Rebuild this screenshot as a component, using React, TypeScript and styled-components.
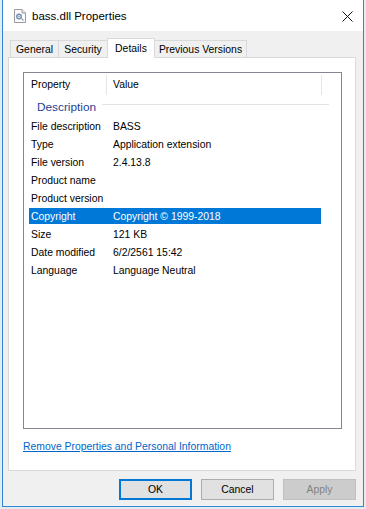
import React from 'react';
import styled, { createGlobalStyle } from 'styled-components';

const GlobalStyle = createGlobalStyle`
  html, body {
    margin: 0;
    padding: 0;
    background: #e6ebf0;
  }
  body {
    font-family: "Segoe UI", "Liberation Sans", Arial, sans-serif;
    font-size: 10.4px;
    color: #000;
  }
`;

const tabs = [
  { label: 'General', width: 49 },
  { label: 'Security', width: 50 },
  { label: 'Details', width: 48, selected: true },
  { label: 'Previous Versions', width: 93 }
];

const rows = [
  { name: 'File description', value: 'BASS' },
  { name: 'Type', value: 'Application extension' },
  { name: 'File version', value: '2.4.13.8' },
  { name: 'Product name', value: '' },
  { name: 'Product version', value: '' },
  { name: 'Copyright', value: 'Copyright \u00a9 1999-2018', selected: true },
  { name: 'Size', value: '121 KB' },
  { name: 'Date modified', value: '6/2/2561 15:42' },
  { name: 'Language', value: 'Language Neutral' }
];

const DllIcon = () => (
  <svg width="12" height="14" viewBox="0 0 12 14">
    <path d="M0.5 0.5 H8 L11.5 4 V13.5 H0.5 Z" fill="#fdfdfd" stroke="#9a9a9a" />
    <path d="M8 0.5 V4 H11.5" fill="#e8e8e8" stroke="#9a9a9a" />
    <circle cx="5" cy="7.5" r="2.3" fill="none" stroke="#6f8fb0" strokeWidth="1.4" />
    <circle cx="5" cy="7.5" r="0.8" fill="#6f8fb0" />
    <path d="M7.5 9.5 L9.5 11.5" stroke="#8aa6c2" strokeWidth="1.2" />
  </svg>
);

const CloseIcon = () => (
  <svg width="11" height="11" viewBox="0 0 11 11">
    <path d="M0.5 0.5 L10.5 10.5 M10.5 0.5 L0.5 10.5" stroke="#111" strokeWidth="1" />
  </svg>
);

const App = () => {
  return (
    <>
      <GlobalStyle />
      <Window>
        <TitleBar>
          <TitleIcon>
            <DllIcon />
          </TitleIcon>
          <TitleText>bass.dll Properties</TitleText>
          <CloseButton>
            <CloseIcon />
          </CloseButton>
        </TitleBar>
        <Body>
          <TabStrip>
            {tabs.map((t) => (
              <Tab key={t.label} width={t.width} selected={t.selected}>
                {t.label}
              </Tab>
            ))}
          </TabStrip>
          <Panel>
            <ListBox>
              <HeaderRow>
                <HeaderCell width={83}>Property</HeaderCell>
                <HeaderCell width={215}>Value</HeaderCell>
              </HeaderRow>
              <GroupHeader>
                <GroupTitle>Description</GroupTitle>
                <GroupLine />
              </GroupHeader>
              {rows.map((r) => (
                <Row key={r.name} selected={r.selected}>
                  <NameCell>{r.name}</NameCell>
                  <ValueCell>{r.value}</ValueCell>
                </Row>
              ))}
            </ListBox>
            <RemoveLink>Remove Properties and Personal Information</RemoveLink>
          </Panel>
          <ButtonBar>
            <DialogButton variant="default">OK</DialogButton>
            <DialogButton>Cancel</DialogButton>
            <DialogButton variant="disabled">Apply</DialogButton>
          </ButtonBar>
        </Body>
      </Window>
    </>
  );
};

export default App;

interface tabProps {
  width: number;
  selected?: boolean;
}

interface rowProps {
  selected?: boolean;
}

interface buttonProps {
  variant?: 'default' | 'disabled';
}

const Window = styled.div`
  margin-left: 2px;
  width: 362px;
  height: 507px;
  box-sizing: border-box;
  border: 1px solid #2c87d6;
  border-top: none;
  background: #f0f0f0;
  display: flex;
  flex-direction: column;
`;

const TitleBar = styled.div`
  height: 31px;
  background: #ffffff;
  display: flex;
  align-items: center;
  flex-shrink: 0;
`;

const TitleIcon = styled.div`
  width: 12px;
  height: 14px;
  margin-left: 11px;
  margin-top: 1px;
  display: flex;
`;

const TitleText = styled.div`
  margin-left: 6px;
  font-size: 11.5px;
  color: #000;
  flex: 1;
`;

const CloseButton = styled.div`
  width: 11px;
  height: 11px;
  margin-right: 10px;
  margin-top: 1px;
  display: flex;
`;

const Body = styled.div`
  flex: 1;
  display: flex;
  flex-direction: column;
  padding: 7px 7px 0 5px;
`;

const TabStrip = styled.div`
  height: 19px;
  display: flex;
  align-items: flex-end;
  padding-left: 2px;
`;

const Tab = styled.div<tabProps>`
  width: ${(p) => p.width}px;
  height: ${(p) => (p.selected ? 20 : 17)}px;
  margin-bottom: ${(p) => (p.selected ? -1 : 0)}px;
  margin-left: -1px;
  box-sizing: border-box;
  border: 1px solid #d9d9d9;
  border-bottom: none;
  background: ${(p) => (p.selected ? '#ffffff' : '#f0f0f0')};
  position: relative;
  z-index: ${(p) => (p.selected ? 2 : 1)};
  display: flex;
  align-items: center;
  justify-content: center;
  padding-top: ${(p) => (p.selected ? 0 : 1)}px;
  &:first-child {
    margin-left: 0;
  }
`;

const Panel = styled.div`
  height: 414px;
  box-sizing: border-box;
  border: 1px solid #d9d9d9;
  background: #ffffff;
  padding: 14px 13px 0 14px;
  display: flex;
  flex-direction: column;
`;

const ListBox = styled.div`
  height: 357px;
  box-sizing: border-box;
  border: 1px solid #828790;
  background: #ffffff;
`;

const HeaderRow = styled.div`
  height: 22px;
  display: flex;
`;

const HeaderCell = styled.div<{ width: number }>`
  width: ${(p) => p.width}px;
  height: 20px;
  margin-top: 2px;
  border-right: 1px solid #e5e5e5;
  padding-left: 7px;
  box-sizing: border-box;
  display: flex;
  align-items: center;
  padding-bottom: 2px;
  & + & {
    padding-left: 6px;
  }
`;

const GroupHeader = styled.div`
  height: 23px;
  display: flex;
  align-items: center;
  padding-left: 13px;
  padding-right: 12px;
`;

const GroupTitle = styled.div`
  font-size: 11.8px;
  color: #1d3f94;
  margin-top: 1px;
`;

const GroupLine = styled.div`
  flex: 1;
  height: 1px;
  background: #e2e2e2;
  margin-left: 6px;
  margin-bottom: 5px;
`;

const Row = styled.div<rowProps>`
  width: 292px;
  height: 16px;
  margin-left: 5px;
  margin-bottom: 2px;
  display: flex;
  align-items: center;
  background: ${(p) => (p.selected ? '#0078d7' : 'transparent')};
  color: ${(p) => (p.selected ? '#ffffff' : '#000000')};
`;

const NameCell = styled.div`
  width: 84px;
  padding-left: 2px;
  box-sizing: border-box;
  white-space: nowrap;
`;

const ValueCell = styled.div`
  flex: 1;
  white-space: nowrap;
`;

const RemoveLink = styled.a`
  margin-top: 12px;
  color: #0066cc;
  text-decoration: underline;
  cursor: pointer;
  align-self: flex-start;
`;

const ButtonBar = styled.div`
  display: flex;
  justify-content: flex-end;
  gap: 9px;
  padding-top: 8px;
`;

const DialogButton = styled.div<buttonProps>`
  width: 73px;
  height: 21px;
  box-sizing: border-box;
  display: flex;
  align-items: center;
  justify-content: center;
  border: ${(p) =>
    p.variant === 'default' ? '2px solid #0078d7' : p.variant === 'disabled' ? '1px solid #bfbfbf' : '1px solid #adadad'};
  background: ${(p) => (p.variant === 'disabled' ? '#cccccc' : '#e1e1e1')};
  color: ${(p) => (p.variant === 'disabled' ? '#838383' : '#000000')};
`;
